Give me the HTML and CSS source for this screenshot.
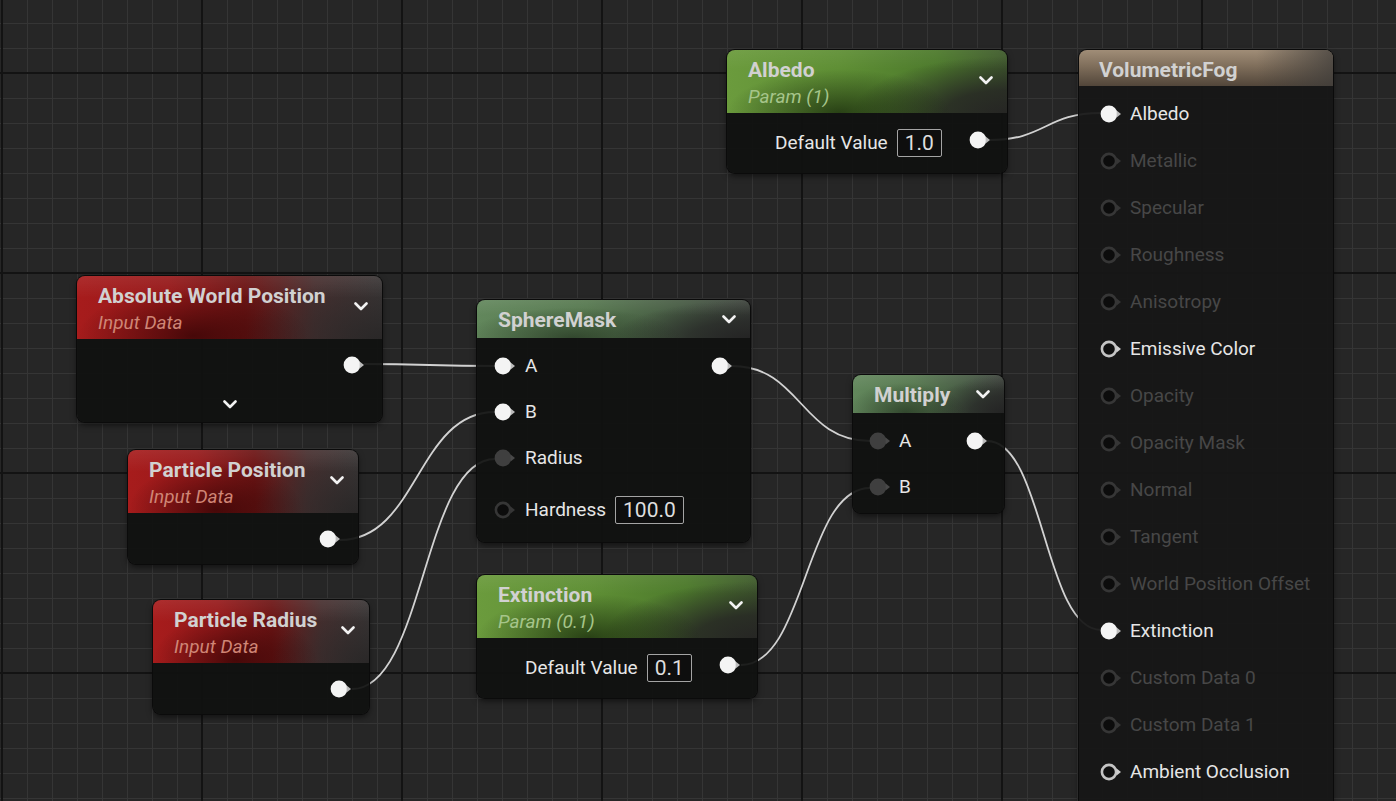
FILE: index.html
```html
<!DOCTYPE html>
<html>
<head>
<meta charset="utf-8">
<title>Material Graph</title>
<link rel="stylesheet" href="styles.css">
</head>
<body>
<div class="graph">
  <svg class="wires" width="1396" height="801" viewBox="0 0 1396 801">
    <path d="M990 140 C1045 140 1046 113 1101 113"/>
    <path d="M364 364 C430 364 429 366 495 366"/>
    <path d="M340 540 C418 540 417 412 495 412"/>
    <path d="M352 689 C424 689 423 459 495 459"/>
    <path d="M732 366 C801 366 801 441 870 441"/>
    <path d="M741 665 C806 665 805 488 870 488"/>
    <path d="M987 441 C1044 441 1044 630 1101 630"/>
  </svg>

  <!-- Albedo param -->
  <div class="node n-albedo">
    <div class="hdr tall hdr-param">
      <div class="titles"><div class="title">Albedo</div><div class="sub sub-green">Param (1)</div></div>
      <svg class="chev" width="14" height="9" viewBox="0 0 14 9"><polyline points="1.5,1.5 7,7 12.5,1.5"/></svg>
    </div>
    <div class="body body-value">
      <span class="lbl">Default Value</span><span class="val">1.0</span><span class="spacer"></span>
      <svg class="pin on raise" width="24" height="18" viewBox="0 0 24 18"><circle cx="9" cy="9" r="8.4"/><path d="M16.6 5.6 L21 9 L16.6 12.4 Z"/></svg>
    </div>
  </div>

  <!-- Absolute World Position -->
  <div class="node n-awp">
    <div class="hdr tall hdr-red">
      <div class="titles"><div class="title">Absolute World Position</div><div class="sub sub-red">Input Data</div></div>
      <svg class="chev" width="14" height="9" viewBox="0 0 14 9"><polyline points="1.5,1.5 7,7 12.5,1.5"/></svg>
    </div>
    <div class="body body-out">
      <div class="row out">
        <svg class="pin on" width="24" height="18" viewBox="0 0 24 18"><circle cx="9" cy="9" r="8.4"/><path d="M16.6 5.6 L21 9 L16.6 12.4 Z"/></svg>
      </div>
      <div class="more">
        <svg class="chev" width="14" height="9" viewBox="0 0 14 9"><polyline points="1.5,1.5 7,7 12.5,1.5"/></svg>
      </div>
    </div>
  </div>

  <!-- Particle Position -->
  <div class="node n-pp">
    <div class="hdr tall hdr-red">
      <div class="titles"><div class="title">Particle Position</div><div class="sub sub-red">Input Data</div></div>
      <svg class="chev" width="14" height="9" viewBox="0 0 14 9"><polyline points="1.5,1.5 7,7 12.5,1.5"/></svg>
    </div>
    <div class="body body-out">
      <div class="row out">
        <svg class="pin on" width="24" height="18" viewBox="0 0 24 18"><circle cx="9" cy="9" r="8.4"/><path d="M16.6 5.6 L21 9 L16.6 12.4 Z"/></svg>
      </div>
    </div>
  </div>

  <!-- Particle Radius -->
  <div class="node n-pr">
    <div class="hdr tall hdr-red">
      <div class="titles"><div class="title">Particle Radius</div><div class="sub sub-red">Input Data</div></div>
      <svg class="chev" width="14" height="9" viewBox="0 0 14 9"><polyline points="1.5,1.5 7,7 12.5,1.5"/></svg>
    </div>
    <div class="body body-out">
      <div class="row out">
        <svg class="pin on" width="24" height="18" viewBox="0 0 24 18"><circle cx="9" cy="9" r="8.4"/><path d="M16.6 5.6 L21 9 L16.6 12.4 Z"/></svg>
      </div>
    </div>
  </div>

  <!-- SphereMask -->
  <div class="node n-sphere">
    <div class="hdr short hdr-func">
      <div class="title">SphereMask</div>
      <svg class="chev" width="14" height="9" viewBox="0 0 14 9"><polyline points="1.5,1.5 7,7 12.5,1.5"/></svg>
    </div>
    <div class="body body-func">
      <div class="row in">
        <svg class="pin on" width="24" height="18" viewBox="0 0 24 18"><circle cx="9" cy="9" r="8.4"/><path d="M16.6 5.6 L21 9 L16.6 12.4 Z"/></svg>
        <span class="lbl">A</span><span class="spacer"></span>
        <svg class="pin on" width="24" height="18" viewBox="0 0 24 18"><circle cx="9" cy="9" r="8.4"/><path d="M16.6 5.6 L21 9 L16.6 12.4 Z"/></svg>
      </div>
      <div class="row in">
        <svg class="pin on" width="24" height="18" viewBox="0 0 24 18"><circle cx="9" cy="9" r="8.4"/><path d="M16.6 5.6 L21 9 L16.6 12.4 Z"/></svg>
        <span class="lbl">B</span>
      </div>
      <div class="row in">
        <svg class="pin gray" width="24" height="18" viewBox="0 0 24 18"><circle cx="9" cy="9" r="8.4"/><path d="M16.6 5.6 L21 9 L16.6 12.4 Z"/></svg>
        <span class="lbl">Radius</span>
      </div>
      <div class="row in tallrow">
        <svg class="pin off" width="24" height="18" viewBox="0 0 24 18"><circle cx="9" cy="9" r="7.1"/><path d="M16.6 5.6 L21 9 L16.6 12.4 Z"/></svg>
        <span class="lbl">Hardness</span><span class="val">100.0</span>
      </div>
    </div>
  </div>

  <!-- Multiply -->
  <div class="node n-mult">
    <div class="hdr short hdr-func">
      <div class="title">Multiply</div>
      <svg class="chev" width="14" height="9" viewBox="0 0 14 9"><polyline points="1.5,1.5 7,7 12.5,1.5"/></svg>
    </div>
    <div class="body body-func">
      <div class="row in in-m">
        <svg class="pin gray" width="24" height="18" viewBox="0 0 24 18"><circle cx="9" cy="9" r="8.4"/><path d="M16.6 5.6 L21 9 L16.6 12.4 Z"/></svg>
        <span class="lbl">A</span><span class="spacer"></span>
        <svg class="pin on" width="24" height="18" viewBox="0 0 24 18"><circle cx="9" cy="9" r="8.4"/><path d="M16.6 5.6 L21 9 L16.6 12.4 Z"/></svg>
      </div>
      <div class="row in in-m">
        <svg class="pin gray" width="24" height="18" viewBox="0 0 24 18"><circle cx="9" cy="9" r="8.4"/><path d="M16.6 5.6 L21 9 L16.6 12.4 Z"/></svg>
        <span class="lbl">B</span>
      </div>
    </div>
  </div>

  <!-- Extinction param -->
  <div class="node n-ext">
    <div class="hdr tall hdr-param">
      <div class="titles"><div class="title">Extinction</div><div class="sub sub-green">Param (0.1)</div></div>
      <svg class="chev" width="14" height="9" viewBox="0 0 14 9"><polyline points="1.5,1.5 7,7 12.5,1.5"/></svg>
    </div>
    <div class="body body-value">
      <span class="lbl">Default Value</span><span class="val">0.1</span><span class="spacer"></span>
      <svg class="pin on raise" width="24" height="18" viewBox="0 0 24 18"><circle cx="9" cy="9" r="8.4"/><path d="M16.6 5.6 L21 9 L16.6 12.4 Z"/></svg>
    </div>
  </div>

  <!-- VolumetricFog result -->
  <div class="node n-fog">
    <div class="hdr fog-hdr hdr-fog">
      <div class="title">VolumetricFog</div>
    </div>
    <div class="body body-fog">
      <div class="frow"><svg class="pin on" width="24" height="18" viewBox="0 0 24 18"><circle cx="9" cy="9" r="8.4"/><path d="M16.6 5.6 L21 9 L16.6 12.4 Z"/></svg><span class="lbl">Albedo</span></div>
      <div class="frow dim"><svg class="pin off" width="24" height="18" viewBox="0 0 24 18"><circle cx="9" cy="9" r="7.1"/><path d="M16.6 5.6 L21 9 L16.6 12.4 Z"/></svg><span class="lbl">Metallic</span></div>
      <div class="frow dim"><svg class="pin off" width="24" height="18" viewBox="0 0 24 18"><circle cx="9" cy="9" r="7.1"/><path d="M16.6 5.6 L21 9 L16.6 12.4 Z"/></svg><span class="lbl">Specular</span></div>
      <div class="frow dim"><svg class="pin off" width="24" height="18" viewBox="0 0 24 18"><circle cx="9" cy="9" r="7.1"/><path d="M16.6 5.6 L21 9 L16.6 12.4 Z"/></svg><span class="lbl">Roughness</span></div>
      <div class="frow dim"><svg class="pin off" width="24" height="18" viewBox="0 0 24 18"><circle cx="9" cy="9" r="7.1"/><path d="M16.6 5.6 L21 9 L16.6 12.4 Z"/></svg><span class="lbl">Anisotropy</span></div>
      <div class="frow"><svg class="pin ring" width="24" height="18" viewBox="0 0 24 18"><circle cx="9" cy="9" r="7.1"/><path d="M16.6 5.6 L21 9 L16.6 12.4 Z"/></svg><span class="lbl">Emissive Color</span></div>
      <div class="frow dim"><svg class="pin off" width="24" height="18" viewBox="0 0 24 18"><circle cx="9" cy="9" r="7.1"/><path d="M16.6 5.6 L21 9 L16.6 12.4 Z"/></svg><span class="lbl">Opacity</span></div>
      <div class="frow dim"><svg class="pin off" width="24" height="18" viewBox="0 0 24 18"><circle cx="9" cy="9" r="7.1"/><path d="M16.6 5.6 L21 9 L16.6 12.4 Z"/></svg><span class="lbl">Opacity Mask</span></div>
      <div class="frow dim"><svg class="pin off" width="24" height="18" viewBox="0 0 24 18"><circle cx="9" cy="9" r="7.1"/><path d="M16.6 5.6 L21 9 L16.6 12.4 Z"/></svg><span class="lbl">Normal</span></div>
      <div class="frow dim"><svg class="pin off" width="24" height="18" viewBox="0 0 24 18"><circle cx="9" cy="9" r="7.1"/><path d="M16.6 5.6 L21 9 L16.6 12.4 Z"/></svg><span class="lbl">Tangent</span></div>
      <div class="frow dim"><svg class="pin off" width="24" height="18" viewBox="0 0 24 18"><circle cx="9" cy="9" r="7.1"/><path d="M16.6 5.6 L21 9 L16.6 12.4 Z"/></svg><span class="lbl">World Position Offset</span></div>
      <div class="frow"><svg class="pin on" width="24" height="18" viewBox="0 0 24 18"><circle cx="9" cy="9" r="8.4"/><path d="M16.6 5.6 L21 9 L16.6 12.4 Z"/></svg><span class="lbl">Extinction</span></div>
      <div class="frow dim"><svg class="pin off" width="24" height="18" viewBox="0 0 24 18"><circle cx="9" cy="9" r="7.1"/><path d="M16.6 5.6 L21 9 L16.6 12.4 Z"/></svg><span class="lbl">Custom Data 0</span></div>
      <div class="frow dim"><svg class="pin off" width="24" height="18" viewBox="0 0 24 18"><circle cx="9" cy="9" r="7.1"/><path d="M16.6 5.6 L21 9 L16.6 12.4 Z"/></svg><span class="lbl">Custom Data 1</span></div>
      <div class="frow"><svg class="pin ring" width="24" height="18" viewBox="0 0 24 18"><circle cx="9" cy="9" r="7.1"/><path d="M16.6 5.6 L21 9 L16.6 12.4 Z"/></svg><span class="lbl">Ambient Occlusion</span></div>
    </div>
  </div>
</div>
</body>
</html>
```

FILE: styles.css
```css
html, body {
  margin: 0;
  padding: 0;
  background: #262626;
}

.graph {
  position: relative;
  width: 1396px;
  height: 801px;
  overflow: hidden;
  font-family: Roboto, "Liberation Sans", sans-serif;
  background-color: #262626;
  background-image:
    linear-gradient(to right, #131313 2px, transparent 2px),
    linear-gradient(to bottom, #131313 2px, transparent 2px),
    linear-gradient(to right, #353535 1px, transparent 1px),
    linear-gradient(to bottom, #353535 1px, transparent 1px);
  background-size: 200px 200px, 200px 200px, 25px 25px, 25px 25px;
  background-position: 1px 0, 0 72px, 2px 0, 0 23px;
}

.wires {
  position: absolute;
  left: 0;
  top: 0;
}

.wires path {
  fill: none;
  stroke: #d2d2d2;
  stroke-width: 1.8;
}

/* ---------- nodes ---------- */
.node {
  position: absolute;
  border-radius: 8px;
  background: rgba(16, 17, 16, 0.93);
  box-shadow: 0 0 0 1px #0b0b0b, 0 3px 6px rgba(0, 0, 0, 0.55);
  overflow: hidden;
}

.n-albedo { left: 727px; top: 50px; width: 280px; }
.n-awp    { left: 77px;  top: 276px; width: 305px; }
.n-pp     { left: 128px; top: 450px; width: 230px; }
.n-pr     { left: 153px; top: 600px; width: 216px; }
.n-sphere { left: 477px; top: 300px; width: 273px; }
.n-mult   { left: 853px; top: 375px; width: 151px; }
.n-ext    { left: 477px; top: 575px; width: 280px; }
.n-fog    { left: 1079px; top: 50px; width: 254px; height: 790px; background: rgba(22, 22, 22, 0.94); border-radius: 8px 8px 0 0; }

/* ---------- headers ---------- */
.hdr {
  display: flex;
  justify-content: space-between;
  box-sizing: border-box;
  padding: 0 14px 0 21px;
}

.hdr.tall {
  height: 63px;
  align-items: flex-start;
  padding-top: 8px;
}

.hdr.tall .chev {
  margin-top: 18px;
}

.hdr.short {
  height: 38px;
  align-items: center;
  padding-top: 1px;
}

.fog-hdr {
  height: 36px;
  align-items: center;
  padding-left: 20px;
  padding-top: 4px;
}

.title {
  font-weight: 700;
  font-size: 21px;
  line-height: 24px;
  color: #d1d1d1;
  white-space: nowrap;
}

.sub {
  font-style: italic;
  font-size: 19px;
  line-height: 26px;
  margin-top: 2px;
  white-space: nowrap;
}

.sub-red { color: #cf8676; }
.sub-green { color: #a6c58a; }

.chev {
  flex: none;
}

.chev polyline {
  fill: none;
  stroke: #f2f2f2;
  stroke-width: 2.6;
  stroke-linecap: round;
  stroke-linejoin: round;
}

.hdr-red {
  background:
    linear-gradient(to bottom, rgba(255, 255, 255, 0.08), rgba(255, 255, 255, 0) 35%),
    radial-gradient(ellipse 38% 75% at 38% 95%, rgba(35, 0, 0, 0.65), rgba(35, 0, 0, 0) 100%),
    radial-gradient(ellipse 45% 100% at 100% 100%, rgba(40, 38, 38, 0.9) 0%, rgba(40, 38, 38, 0) 100%),
    linear-gradient(to right, #a71c1c 0%, #96191a 30%, #6c1414 55%, #472f2f 78%, #3a3636 100%);
}

.hdr-param {
  background:
    linear-gradient(to bottom, rgba(255, 255, 255, 0.06), rgba(255, 255, 255, 0) 30%),
    radial-gradient(ellipse 40% 70% at 40% 100%, rgba(18, 32, 8, 0.7), rgba(18, 32, 8, 0) 100%),
    radial-gradient(ellipse 55% 90% at 100% 100%, rgba(38, 38, 36, 1) 0%, rgba(38, 38, 36, 0.85) 40%, rgba(38, 38, 36, 0) 100%),
    linear-gradient(to right, #6b9b3d 0%, #5f8f35 40%, #4d7a2c 75%, #3f5a2c 100%);
}

.hdr-func {
  background:
    linear-gradient(to bottom, rgba(255, 255, 255, 0.08), rgba(255, 255, 255, 0) 40%),
    radial-gradient(ellipse 40% 80% at 35% 100%, rgba(20, 30, 18, 0.55), rgba(20, 30, 18, 0) 100%),
    radial-gradient(ellipse 50% 100% at 100% 100%, rgba(36, 36, 36, 1) 0%, rgba(36, 36, 36, 0.7) 45%, rgba(36, 36, 36, 0) 100%),
    linear-gradient(to right, #62875c 0%, #56784f 40%, #465a43 75%, #3c423b 100%);
}

.hdr-fog {
  background:
    linear-gradient(to right, rgba(60, 58, 55, 0) 70%, rgba(62, 60, 58, 0.75) 100%),
    linear-gradient(to bottom, #a08d77 0%, #7f6e5b 45%, #52463a 100%);
}

/* ---------- bodies ---------- */
.lbl {
  font-size: 19px;
  line-height: 24px;
  color: #e6e6e6;
  white-space: nowrap;
}

.spacer { flex: 1; }

.val {
  box-sizing: border-box;
  height: 28px;
  padding: 0 7px;
  border: 1px solid #a4a4a4;
  border-radius: 2px;
  background: #0e0e0e;
  font-size: 21px;
  line-height: 26px;
  color: #dedede;
  margin-left: 9px;
}

.pin { flex: none; display: block; }
.pin.on circle { fill: #f4f4f4; }
.pin.on path { fill: #bcbcbc; }
.pin.gray circle { fill: #3f3f3f; }
.pin.gray path { fill: #484848; }
.pin.off circle { fill: #0c0c0c; stroke: #363636; stroke-width: 2.6; }
.pin.off path { fill: #363636; }
.pin.ring circle { fill: #101010; stroke: #c4c4c4; stroke-width: 2.6; }
.pin.ring path { fill: #cfcfcf; }

.raise { margin-bottom: 6px; }

.body-value {
  height: 60px;
  display: flex;
  align-items: center;
  padding: 0 14px 0 48px;
}

.body-out {
  padding: 3px 0 2px;
}

.row {
  display: flex;
  align-items: center;
  height: 46px;
}

.row.out {
  justify-content: flex-end;
  padding-right: 15px;
}

.more {
  height: 32px;
  display: flex;
  justify-content: center;
  align-items: center;
}

.body-func {
  padding: 5px 0 3px;
}

.row.in {
  padding: 0 15px 0 17px;
  gap: 7px;
}

.row.in .val { margin-left: 2px; }

.row.in-m {
  padding: 0 14px 0 16px;
  gap: 6px;
}

.row.tallrow {
  height: 58px;
}

.body-fog {
  padding-top: 4px;
}

.frow {
  display: flex;
  align-items: center;
  height: 47px;
  padding-left: 21px;
  gap: 6px;
}

.frow.dim .lbl {
  color: #474747;
}
```
